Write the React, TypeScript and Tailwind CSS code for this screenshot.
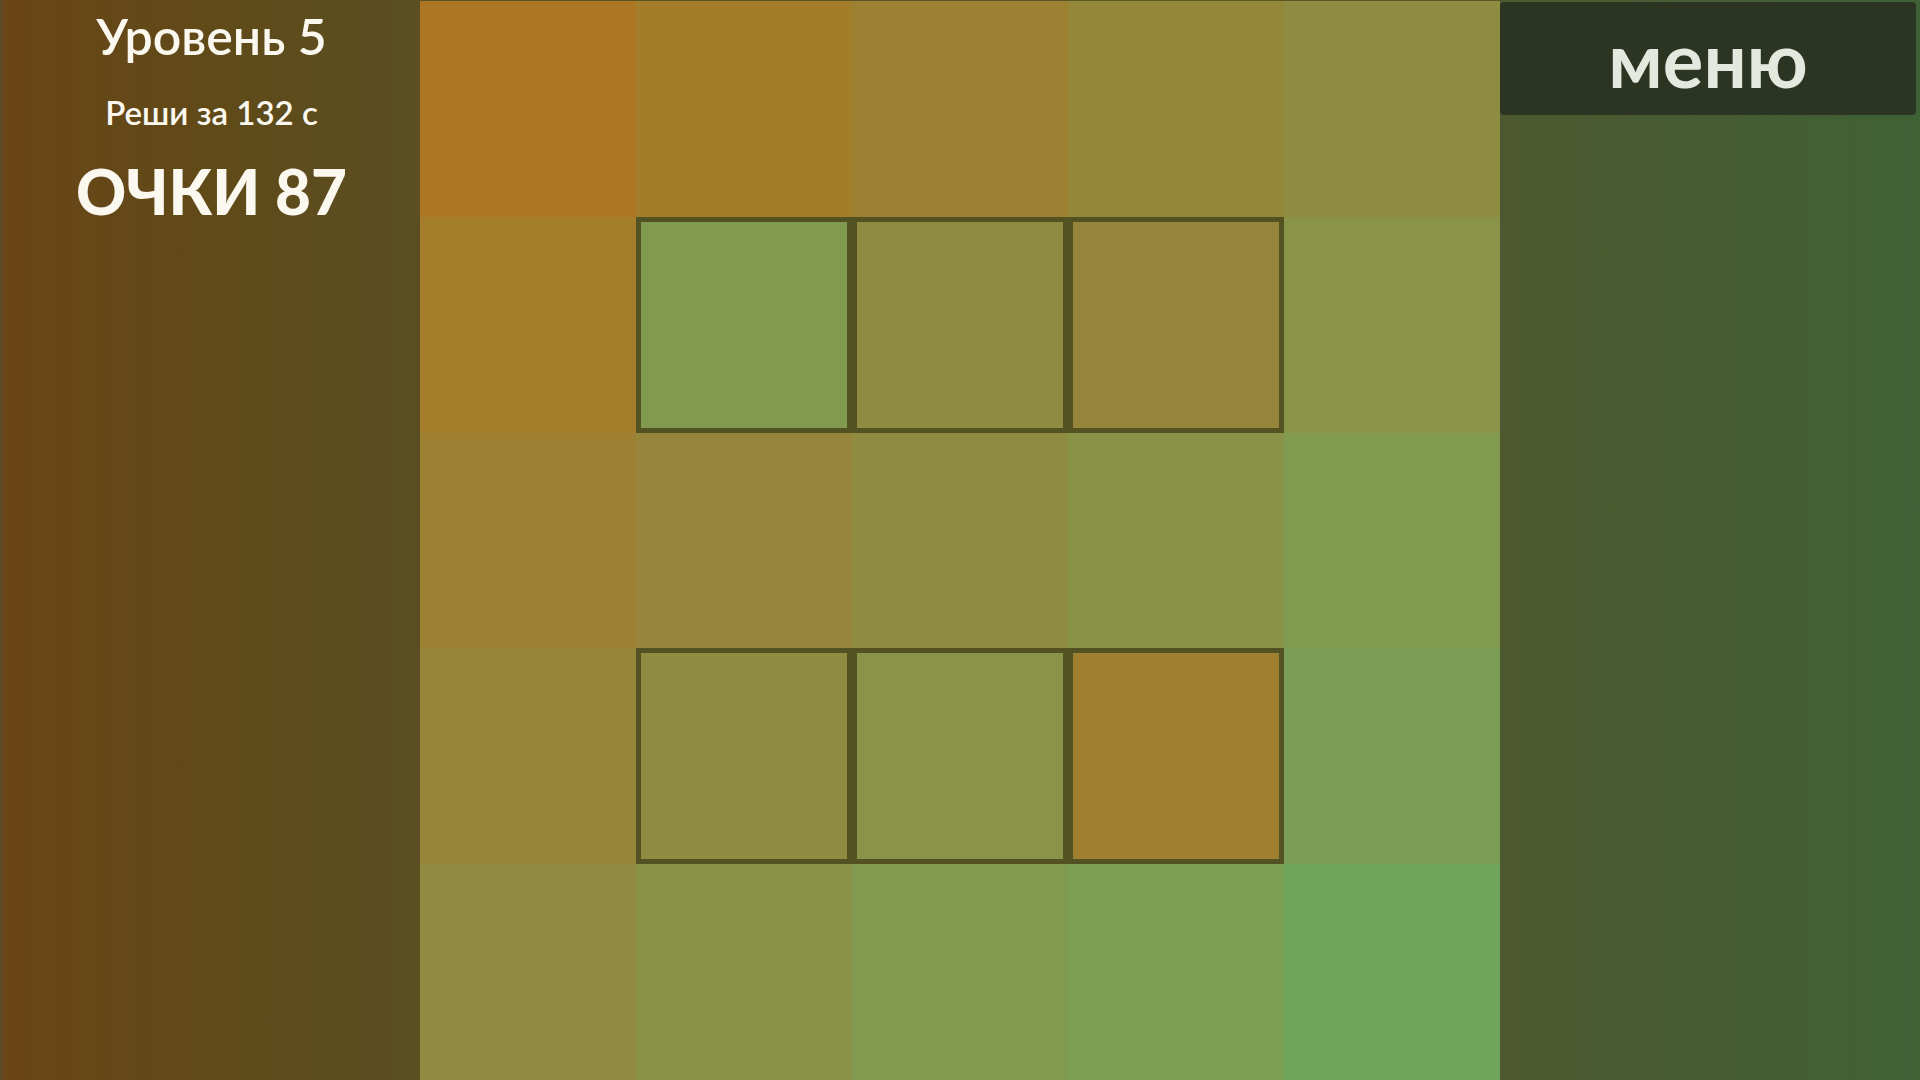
import React from "react";

const cells: string[][] = [
  ["#ad7622", "#a47d2a", "#9c8132", "#958739", "#8e8c41"],
  ["#a57e2c", "#829a50", "#8f8b40", "#96853a", "#8a9448"],
  ["#9e8033", "#96853a", "#8f8b41", "#899348", "#809b50"],
  ["#978639", "#8f8b41", "#899349", "#a08030", "#7b9e56"],
  ["#908b41", "#899348", "#819a4f", "#7b9f55", "#70a45b"],
];

const outlined = (r: number, c: number) => (r === 1 || r === 3) && c >= 1 && c <= 3;

export default function App() {
  return (
    <div
      className="flex h-[1080px] w-[1920px] overflow-hidden"
      style={{ fontFamily: "Lato, 'Noto Sans', sans-serif" }}
    >
      <div className="flex w-[420px] flex-col items-center border-l-[3px] border-[#5d4a24] bg-linear-to-r from-[#6a4516] via-[#604a18] to-[#5a4e22] text-[#fbf8f0]">
        <div className="mt-[9px] text-[50px] font-semibold leading-[1.1]">Уровень 5</div>
        <div className="mt-[30px] text-[33px] font-semibold leading-[1.1]">Реши за 132 с</div>
        <div className="mt-[27px] text-[62px] font-black leading-[1.1]">ОЧКИ 87</div>
      </div>
      <div className="grid h-[1080px] w-[1080px] grid-cols-5 grid-rows-5 border-t border-[#5a5524]">
        {cells.map((row, r) =>
          row.map((col, c) => (
            <div
              key={`${r}-${c}`}
              className={outlined(r, c) ? "border-[5px] border-[#535222]" : ""}
              style={{ backgroundColor: col }}
            />
          ))
        )}
      </div>
      <div className="flex w-[420px] flex-col bg-linear-to-r from-[#4d5830] to-[#3f6136]">
        <div className="mr-[4px] mt-[2px] flex h-[113px] items-center justify-center rounded-[4px] bg-[#2b3522] text-[#e4e8df]">
          <span className="text-[76px] font-bold leading-none">меню</span>
        </div>
      </div>
    </div>
  );
}
